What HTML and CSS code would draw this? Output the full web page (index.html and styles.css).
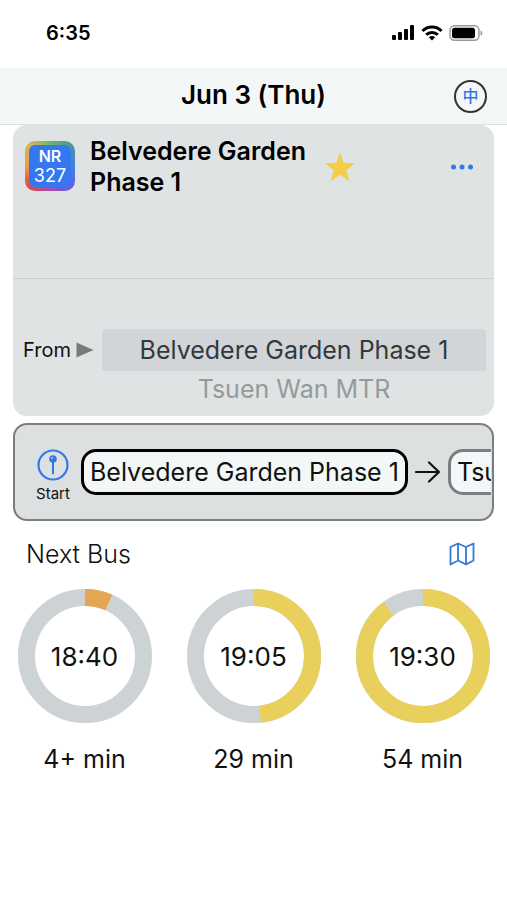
FILE: index.html
```html
<!DOCTYPE html>
<html lang="en">
<head>
<meta charset="utf-8">
<meta name="viewport" content="width=device-width, initial-scale=1">
<title>NR 327</title>
<link rel="stylesheet" href="styles.css">
</head>
<body>
<div class="status">
  <time class="clock">6:35</time>
  <div class="indicators">
    <svg width="24" height="16" viewBox="0 0 24 16" aria-hidden="true"><rect x="1" y="10" width="4" height="5" rx="1"/><rect x="7" y="7" width="4" height="8" rx="1"/><rect x="13" y="4" width="4" height="11" rx="1"/><rect x="19" y="0" width="4" height="15" rx="1"/></svg>
    <svg width="22" height="16" viewBox="0 0 22 16" aria-hidden="true"><g fill="none" stroke="#000" stroke-width="3"><path d="M1.500 6A13.500 13.500 0 0 1 20.500 6"/><path d="M5.200 9.800A8.200 8.200 0 0 1 16.800 9.800"/></g><path d="M11 15.500L7.800 12.300A4.500 4.500 0 0 1 14.200 12.300Z"/></svg>
    <svg width="34" height="16" viewBox="0 0 34 16" aria-hidden="true"><rect x="1" y="0.800" width="29" height="14.400" rx="4.500" fill="#fff" stroke="#999" stroke-width="1.400"/><rect x="3" y="2.800" width="23" height="10.400" rx="2.500"/><path d="M31.500 5.500Q33.500 6 33.500 8T31.500 10.500Z" fill="#999"/></svg>
  </div>
</div>
<header class="bar">
  <h1>Jun 3 (Thu)</h1>
  <button class="lang" type="button" lang="zh">中</button>
</header>
<main>
  <section class="card">
    <div class="route">
      <div class="badge"><b>NR</b><span>327</span></div>
      <h2>Belvedere Garden Phase 1</h2>
      <button class="icon star" type="button" aria-label="Favourite"><svg width="32" height="32" viewBox="0 0 32 32"><path d="M16 2.500L19.500 12.600L30 12.800L21.600 19.200L24.700 29.300L16 23.300L7.300 29.300L10.400 19.200L2 12.800L12.500 12.600Z" fill="#f6ce46" stroke="#f6ce46" stroke-linejoin="round"/></svg></button>
      <button class="icon more" type="button" aria-label="More"><svg width="24" height="8" viewBox="0 0 24 8" fill="#3478e5"><circle cx="3.500" cy="4" r="2.500"/><circle cx="12" cy="4" r="2.500"/><circle cx="20.500" cy="4" r="2.500"/></svg></button>
    </div>
    <div class="origin">
      <span class="from">From <svg width="18" height="16" viewBox="0 0 18 16" aria-hidden="true"><path d="M0.500 0.500L17.500 8L0.500 15.500Z" fill="#777b7c"/></svg></span>
      <div class="wheel">
        <button class="selected" type="button">Belvedere Garden Phase 1</button>
        <button type="button">Tsuen Wan MTR</button>
      </div>
    </div>
  </section>
  <section class="stops">
    <div class="track">
      <button class="start" type="button"><svg width="32" height="32" viewBox="0 0 32 32" aria-hidden="true"><circle cx="16" cy="16" r="14.500" fill="none" stroke="#3478f0" stroke-width="2.200"/><circle cx="16" cy="10" r="3.800" fill="#3478e5"/><path d="M16 12V24.500" stroke="#3478e5" stroke-width="2" stroke-linecap="round"/><circle cx="15" cy="9" r="1" fill="#a9c6f5"/></svg><span>Start</span></button>
      <button class="stop current" type="button">Belvedere Garden Phase 1</button>
      <svg class="arrow" width="26" height="22" viewBox="0 0 26 22" aria-hidden="true"><path d="M1 11H24M14 1.500L24 11L14 20.500" fill="none" stroke="#111" stroke-width="2.200" stroke-linecap="round" stroke-linejoin="round"/></svg>
      <button class="stop" type="button">Tsuen Wan MTR</button>
    </div>
  </section>
  <section>
    <div class="heading">
      <h3>Next Bus</h3>
      <button class="icon" type="button" aria-label="Map"><svg width="26" height="24" viewBox="0 0 26 24" fill="none" stroke="#3478d8" stroke-width="1.800" stroke-linejoin="round"><path d="M1.500 5L9 1.500L17 5L24.500 1.500V18.500L17 22.500L9 18.500L1.500 22.500ZM9 1.500V18.500M17 5V22.500"/></svg></button>
    </div>
    <ul class="times">
      <li><div class="dial"><svg viewBox="0 0 134 134" aria-hidden="true"><circle class="ring" cx="67" cy="67" r="58.500"/><circle class="ring soon" cx="67" cy="67" r="58.500" pathLength="60" stroke-dasharray="4 60" transform="rotate(-90 67 67)"/></svg><time>18:40</time></div><p>4+ min</p></li>
      <li><div class="dial"><svg viewBox="0 0 134 134" aria-hidden="true"><circle class="ring" cx="67" cy="67" r="58.500"/><circle class="ring later" cx="67" cy="67" r="58.500" pathLength="60" stroke-dasharray="29 60" transform="rotate(-90 67 67)"/></svg><time>19:05</time></div><p>29 min</p></li>
      <li><div class="dial"><svg viewBox="0 0 134 134" aria-hidden="true"><circle class="ring" cx="67" cy="67" r="58.500"/><circle class="ring later" cx="67" cy="67" r="58.500" pathLength="60" stroke-dasharray="54 60" transform="rotate(-90 67 67)"/></svg><time>19:30</time></div><p>54 min</p></li>
    </ul>
  </section>
</main>
</body>
</html>
```
FILE: styles.css
```css
* { box-sizing: border-box; margin: 0; padding: 0; }
body { background: #fff; color: #111; font-family: Inter, "Noto Sans CJK TC", sans-serif; font-size: 25px; }
button { border: 0; background: none; color: inherit; font: inherit; }
svg { display: block; flex: none; }
.status { display: flex; justify-content: space-between; align-items: center; height: 68px; padding: 0 24px 2px 46px; }
.clock { color: #000; font-size: 20px; font-weight: 600; }
.indicators { display: flex; gap: 6px; }
.bar { display: grid; grid-template-columns: 1fr auto 1fr; align-items: center; height: 57px; padding: 0 20px 2px; background: #f3f7f8; border-bottom: 1px solid #dcdfe0; }
.bar h1 { grid-column: 2; color: #000; font-size: 26px; font-weight: 600; line-height: 32px; }
.lang { justify-self: end; width: 33px; height: 33px; margin-top: 2px; border: 2px solid #333; border-radius: 50%; color: #3478d8; font-size: 16px; font-weight: 500; line-height: 28px; }
main { padding: 0 13px; }
.card { border-radius: 14px; background: #dfe3e4; }
.route { display: flex; align-items: flex-start; height: 154px; padding: 11px 20px 0 12px; border-bottom: 1px solid #ccd0d1; }
.badge { display: flex; flex-direction: column; flex: none; justify-content: center; width: 50px; height: 50px; margin-top: 5px; border: 4px solid transparent; border-radius: 10px; background: linear-gradient(#3478f0, #3478f0) padding-box, conic-gradient(#6fb36a, #4a9a92 45deg, #3f7fe0 90deg, #6a5ce0 140deg, #a04fb0 180deg, #e04848 225deg, #eb9c4c 270deg, #d5b850 315deg, #6fb36a) border-box; color: #fff; text-align: center; line-height: 20px; }
.badge b { font-size: 16px; font-weight: 600; }
.badge span { font-size: 18px; }
.route h2 { width: 226px; margin-left: 15px; color: #000; font-size: 25px; font-weight: 600; line-height: 31px; }
.star { margin: 15px 0 0 8px; }
.more { margin: 27px 0 0 auto; }
.origin { display: flex; align-items: flex-start; gap: 8px; padding: 50px 8px 8px 10px; }
.from { display: flex; align-items: center; gap: 5px; height: 42px; font-size: 20px; }
.wheel { display: flex; flex: 1; flex-direction: column; }
.wheel button { height: 37px; color: #969a9b; line-height: 35px; }
.wheel .selected { height: 42px; border-radius: 4px; background: #d1d5d8; color: #33383b; line-height: 42px; }
.stops { margin-top: 7px; padding-right: 1px; overflow: hidden; border: 2px solid #7b7e80; border-radius: 14px; background: #dce0e1; }
.track { display: flex; align-items: center; height: 94px; overflow: hidden; }
.start { display: flex; flex: none; flex-direction: column; align-items: center; gap: 2px; width: 48px; margin: 10px 4px 0 14px; font-size: 15px; line-height: 22px; }
.stop { flex: none; height: 46px; padding: 0 6px; border: 3px solid #7b7e80; border-radius: 15px; background: #f3f7f8; white-space: nowrap; }
.current { border-color: #000; }
.arrow { margin: 0 7px; }
.heading { display: flex; align-items: center; justify-content: space-between; height: 68px; padding: 0 19px 2px 13px; }
.heading h3 { font-size: 25px; font-weight: 300; }
.times { display: grid; grid-template-columns: repeat(3, 1fr); margin: 0 -13px; list-style: none; text-align: center; }
.dial { display: grid; place-items: center; }
.dial > * { grid-area: 1 / 1; }
.dial svg { width: 134px; height: 134px; }
.ring { fill: none; stroke: #cdd2d4; stroke-width: 17; }
.soon { stroke: #e3a652; }
.later { stroke: #e9d05d; }
.dial time { font-size: 26px; }
.times p { margin-top: 20px; line-height: 32px; }
```
